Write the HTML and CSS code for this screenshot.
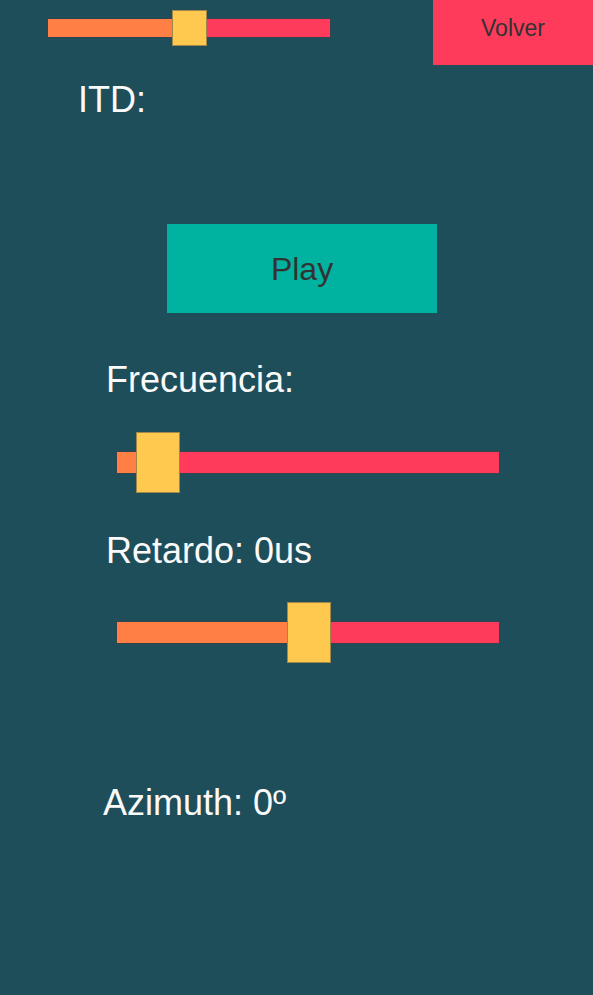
FILE: index.html
```html
<!DOCTYPE html>
<html lang="es">
<head>
<meta charset="utf-8">
<title>ITD</title>
<link rel="stylesheet" href="styles.css">
</head>
<body>
<div class="screen">
  <div class="topbar">
    <div class="slider slider-top">
      <div class="track">
        <div class="fill" style="width:141px"></div>
        <div class="rest"></div>
      </div>
      <div class="thumb" style="left:124px"></div>
    </div>
    <button class="btn btn-back">Volver</button>
  </div>

  <div class="label label-itd">ITD:</div>

  <button class="btn btn-play">Play</button>

  <div class="label label-freq">Frecuencia:</div>

  <div class="slider slider-big slider-freq">
    <div class="track">
      <div class="fill" style="width:41px"></div>
      <div class="rest"></div>
    </div>
    <div class="thumb" style="left:19px"></div>
  </div>

  <div class="label label-delay">Retardo: 0us</div>

  <div class="slider slider-big slider-delay">
    <div class="track">
      <div class="fill" style="width:191px"></div>
      <div class="rest"></div>
    </div>
    <div class="thumb" style="left:170px"></div>
  </div>

  <div class="label label-azimuth">Azimuth: 0º</div>
</div>
</body>
</html>
```

FILE: styles.css
```css
html, body {
  margin: 0;
  padding: 0;
}

body {
  background: #1f4e5b;
  font-family: "Liberation Sans", Arial, sans-serif;
  width: 593px;
  height: 995px;
  overflow: hidden;
}

.screen {
  display: flex;
  flex-direction: column;
  align-items: flex-start;
}

.topbar {
  display: flex;
  justify-content: space-between;
  align-items: flex-start;
  width: 100%;
  height: 65px;
}

.btn {
  border: none;
  margin: 0;
  padding: 0;
  font-family: "Liberation Sans", Arial, sans-serif;
  color: #323232;
  cursor: pointer;
}

.btn-back {
  width: 160px;
  height: 65px;
  background: #ff3b5c;
  font-size: 23px;
  padding-bottom: 9px;
}

.btn-play {
  width: 270px;
  height: 89px;
  margin: 107px 0 0 167px;
  background: #00b3a0;
  font-size: 32px;
  padding-top: 2px;
}

.slider {
  position: relative;
  display: flex;
  align-items: center;
}

.track {
  display: flex;
  width: 100%;
  box-sizing: border-box;
  box-shadow: 0 0 0 1px rgba(70, 60, 70, 0.55);
}

.fill {
  background: #ff7f45;
  height: 100%;
}

.rest {
  background: #ff3b5c;
  flex: 1;
  height: 100%;
}

.thumb {
  position: absolute;
  top: 0;
  background: #fec94e;
  box-shadow: inset 0 0 0 1px rgba(120, 110, 70, 0.7);
}

.slider-top {
  width: 282px;
  height: 36px;
  margin: 10px 0 0 48px;
}

.slider-top .track {
  height: 18px;
}

.slider-top .thumb {
  width: 35px;
  height: 36px;
}

.slider-big {
  width: 382px;
  height: 61px;
  margin-left: 117px;
}

.slider-big .track {
  height: 21px;
}

.slider-big .thumb {
  width: 44px;
  height: 61px;
}

.slider-freq {
  margin-top: 35px;
}

.slider-delay {
  margin-top: 34px;
}

.label {
  color: #fafafa;
  font-size: 36px;
  line-height: 35px;
}

.label-itd {
  margin: 17px 0 0 78px;
}

.label-freq {
  margin: 49px 0 0 106px;
}

.label-delay {
  margin: 40px 0 0 106px;
}

.label-azimuth {
  margin: 122px 0 0 103px;
}
```
